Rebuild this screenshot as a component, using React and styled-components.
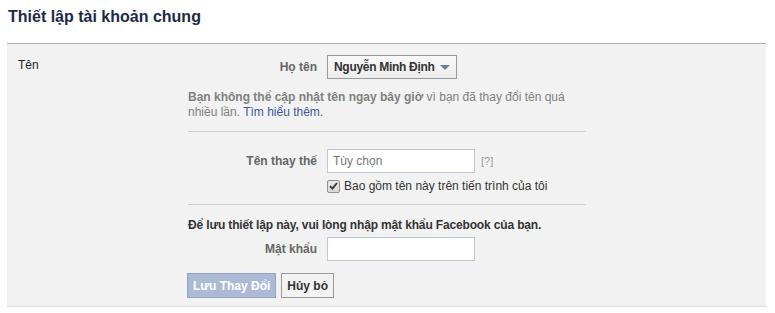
import styled, { createGlobalStyle } from "styled-components"

const GlobalStyle = createGlobalStyle`
  body {
    margin: 0;
    background: #fff;
    font-family: "Liberation Sans", Arial, sans-serif;
    font-size: 12px;
    color: #333;
  }
`

const Page = styled.div`
  padding: 7px 9px 0 7px;
`

const Title = styled.h2`
  margin: 0 0 0 1px;
  height: 36px;
  font-size: 16px;
  font-weight: bold;
  color: #1c2a47;
  line-height: 20px;
`

const Panel = styled.div`
  display: grid;
  grid-template-columns: 181px 398px;
  border-top: 1px solid #aaa;
  border-bottom: 1px solid #ddd;
  background: #f2f2f2;
  padding: 11px 0 8px 0;
`

const SectionName = styled.div`
  padding-left: 11px;
  padding-top: 3px;
  color: #1c1e21;
`

const Content = styled.div`
  display: flex;
  flex-direction: column;
`

const Row = styled.div`
  display: flex;
  align-items: center;
  gap: 10px;
  margin-top: ${props => props.top || 0}px;
`

const Label = styled.label`
  width: 129px;
  text-align: right;
  font-weight: bold;
  color: #666;
`

const NameButton = styled.button`
  display: flex;
  align-items: center;
  gap: 5px;
  height: 24px;
  padding: 0 6px 0 6px;
  border: 1px solid #999;
  background: linear-gradient(#f9f9f9, #ececec);
  font-family: inherit;
  font-size: 12px;
  font-weight: bold;
  letter-spacing: -0.3px;
  color: #333;
`

const Caret = styled.span`
  width: 0;
  height: 0;
  border-left: 5px solid transparent;
  border-right: 5px solid transparent;
  border-top: 5px solid #6d7b9e;
`

const Note = styled.p`
  margin: 11px 0 0 0;
  line-height: 15px;
  color: #808080;
  a { color: #3b5998; text-decoration: none; }
`

const Divider = styled.hr`
  margin: ${props => props.above}px 0 ${props => props.below}px 0;
  border: 0;
  border-top: 1px solid #ccc;
`

const TextInput = styled.input`
  box-sizing: border-box;
  width: 148px;
  height: 24px;
  padding: 0 5px;
  border: 1px solid #bdc7d8;
  background: #fff;
  font-family: inherit;
  font-size: 12px;
  color: #333;
  &::placeholder { color: #777; }
`

const Help = styled.span`
  margin-left: -4px;
  color: #999;
  font-size: 11px;
`

const CheckLine = styled.label`
  display: flex;
  align-items: center;
  gap: 4px;
  margin: 6px 0 0 139px;
  color: #333;
`

const CheckBox = styled.span`
  display: flex;
  align-items: center;
  justify-content: center;
  box-sizing: border-box;
  width: 13px;
  height: 13px;
  border: 1px solid #8e8f8f;
  border-radius: 2px;
  background: linear-gradient(#e8e8e8, #d6d6d6);
`

const Prompt = styled.div`
  font-weight: bold;
  color: #333;
  letter-spacing: -0.15px;
`

const Buttons = styled.div`
  display: flex;
  gap: 5px;
  margin-top: 12px;
  margin-left: -1px;
`

const Button = styled.button`
  height: 25px;
  padding: 0 5px;
  border: 1px solid ${props => props.primary ? "#94a2bf" : "#999"};
  background: ${props => props.primary ? "#adbad6" : "#f2f2f2"};
  color: ${props => props.primary ? "#fff" : "#333"};
  font-family: inherit;
  font-size: 12px;
  font-weight: bold;
`

export default function App() {
  return (
    <Page>
      <GlobalStyle />
      <Title>Thiết lập tài khoản chung</Title>
      <Panel>
        <SectionName>Tên</SectionName>
        <Content>
          <Row>
            <Label>Họ tên</Label>
            <NameButton>Nguyễn Minh Định <Caret /></NameButton>
          </Row>
          <Note>
            <b>Bạn không thể cập nhật tên ngay bây giờ</b> vì bạn đã thay đổi tên quá nhiều lần. <a href="#">Tìm hiểu thêm.</a>
          </Note>
          <Divider above={11} below={17} />
          <Row>
            <Label>Tên thay thế</Label>
            <TextInput placeholder="Tùy chọn" />
            <Help>[?]</Help>
          </Row>
          <CheckLine>
            <CheckBox>
              <svg width="9" height="8" viewBox="0 0 9 8">
                <path d="M1 4.2 L3.4 6.6 L8 1" fill="none" stroke="#333" strokeWidth="1.8" />
              </svg>
            </CheckBox>
            Bao gồm tên này trên tiến trình của tôi
          </CheckLine>
          <Divider above={11} below={13} />
          <Prompt>Để lưu thiết lập này, vui lòng nhập mật khẩu Facebook của bạn.</Prompt>
          <Row top={5}>
            <Label>Mật khẩu</Label>
            <TextInput type="password" />
          </Row>
          <Buttons>
            <Button primary>Lưu Thay Đổi</Button>
            <Button>Hủy bỏ</Button>
          </Buttons>
        </Content>
      </Panel>
    </Page>
  )
}
